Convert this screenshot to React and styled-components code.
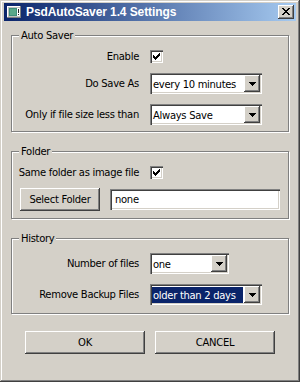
import React from "react";
import styled, { createGlobalStyle } from "styled-components";

const GlobalStyle = createGlobalStyle`
  html, body {
    margin: 0;
    padding: 0;
    background: #d4d0c8;
  }
  body {
    font-family: "DejaVu Sans", Verdana, sans-serif;
    font-size: 10px;
    letter-spacing: -0.3px;
    color: #000;
  }
`;

const raised = `
  box-shadow: inset -1px -1px 0 #404040, inset 1px 1px 0 #fff,
    inset -2px -2px 0 #808080, inset 2px 2px 0 #d4d0c8;
`;

const sunken = `
  box-shadow: inset 1px 1px 0 #808080, inset 2px 2px 0 #404040,
    inset -1px -1px 0 #fff, inset -2px -2px 0 #d4d0c8;
`;

const Window = styled.div`
  box-sizing: border-box;
  width: 300px;
  height: 382px;
  padding: 3px 4px 4px 4px;
  background: #d4d0c8;
  box-shadow: inset -1px -1px 0 #404040, inset 1px 1px 0 #d4d0c8,
    inset -2px -2px 0 #808080, inset 2px 2px 0 #fff;
  display: flex;
  flex-direction: column;
`;

const TitleBar = styled.div`
  height: 18px;
  padding: 0 2px;
  display: flex;
  align-items: center;
  gap: 4px;
  background: linear-gradient(to right, #0a246a, #a6caf0);
`;

const Title = styled.span`
  flex: 1;
  color: #fff;
  font-family: "Liberation Sans", Arial, sans-serif;
  font-weight: bold;
  font-size: 12px;
  letter-spacing: -0.1px;
`;

const CloseButton = styled.span`
  box-sizing: border-box;
  width: 16px;
  height: 14px;
  background: #d4d0c8;
  ${raised}
  display: flex;
  align-items: center;
  justify-content: center;
  padding: 0 1px 1px 0;
`;

const Body = styled.div`
  flex: 1;
  padding: 8px 7px 0 7px;
  display: flex;
  flex-direction: column;
  gap: 13px;
`;

const Group = styled.fieldset`
  margin: 0;
  min-width: 0;
  padding: ${(p) => p.$pt || 7}px 0 ${(p) => p.$pb}px 2px;
  border: 1px solid #808080;
  box-shadow: inset 1px 1px 0 #fff, 1px 1px 0 #fff;
`;

const Caption = styled.legend`
  margin-left: 5px;
  padding: 0 2px;
  line-height: 13px;
  background: #d4d0c8;
`;

const Rows = styled.div`
  display: grid;
  grid-template-columns: 125px auto;
  grid-template-rows: ${(p) => p.$rows};
  column-gap: 11px;
  row-gap: 10px;
  align-items: center;
  justify-items: start;
`;

const Label = styled.span`
  justify-self: end;
  white-space: nowrap;
`;

const CheckBox = styled.span`
  box-sizing: border-box;
  width: 13px;
  height: 13px;
  background: #fff;
  ${sunken}
  display: flex;
  align-items: center;
  justify-content: center;
`;

const Combo = styled.div`
  box-sizing: border-box;
  width: ${(p) => p.$w}px;
  height: 21px;
  padding: 2px;
  background: #fff;
  ${sunken}
  display: flex;
`;

const ComboText = styled.span`
  flex: 1;
  margin: 1px 1px 0 0;
  padding-left: 1px;
  display: flex;
  align-items: center;
  white-space: nowrap;
  background: ${(p) => (p.$selected ? "#0a246a" : "transparent")};
  color: ${(p) => (p.$selected ? "#fff" : "#000")};
`;

const DropButton = styled.span`
  width: 16px;
  background: #d4d0c8;
  ${raised}
  display: flex;
  align-items: center;
  justify-content: center;
`;

const FolderRow = styled.div`
  margin-top: 9px;
  padding-left: 6px;
  display: flex;
  align-items: center;
  gap: 10px;
`;

const PushButton = styled.button`
  box-sizing: border-box;
  width: ${(p) => p.$w}px;
  height: 23px;
  padding: 0;
  border: 0;
  background: #d4d0c8;
  ${raised}
  font: inherit;
  letter-spacing: inherit;
  color: #000;
`;

const TextField = styled.div`
  box-sizing: border-box;
  width: 170px;
  height: 21px;
  padding: 0 5px;
  background: #fff;
  ${sunken}
  display: flex;
  align-items: center;
`;

const Actions = styled.div`
  margin-top: 4px;
  display: flex;
  justify-content: center;
  gap: 10px;
`;

const Check = () => (
  <svg width="7" height="7" viewBox="0 0 7 7" shapeRendering="crispEdges">
    <path
      d="M6 0h1v3H6zM5 1h1v3H5zM4 2h1v3H4zM3 3h1v3H3zM2 4h1v3H2zM1 3h1v3H1zM0 2h1v3H0z"
      fill="#000"
    />
  </svg>
);

const Arrow = () => (
  <svg width="7" height="4" viewBox="0 0 7 4" shapeRendering="crispEdges">
    <path d="M0 0h7v1H0zM1 1h5v1H1zM2 2h3v1H2zM3 3h1v1H3z" fill="#000" />
  </svg>
);

const CloseGlyph = () => (
  <svg width="8" height="7" viewBox="0 0 8 7" shapeRendering="crispEdges">
    <path
      d="M0 0h2v1H0zM6 0h2v1H6zM1 1h2v1H1zM5 1h2v1H5zM2 2h4v1H2zM3 3h2v1H3zM2 4h4v1H2zM1 5h2v1H1zM5 5h2v1H5zM0 6h2v1H0zM6 6h2v1H6z"
      fill="#000"
    />
  </svg>
);

const AppIcon = () => (
  <svg width="16" height="14" viewBox="0 0 16 14" shapeRendering="crispEdges">
    <rect x="1" y="1" width="14" height="12" fill="#c0c0c0" />
    <rect x="1" y="1" width="14" height="1" fill="#fff" />
    <rect x="1" y="1" width="1" height="12" fill="#fff" />
    <rect x="1" y="12" width="14" height="1" fill="#808080" />
    <rect x="14" y="1" width="1" height="12" fill="#808080" />
    <rect x="3" y="3" width="8" height="8" fill="#3f8f7a" />
    <rect x="4" y="4" width="6" height="6" fill="#5aa88a" />
    <rect x="11" y="3" width="3" height="8" fill="#fff" />
    <rect x="12" y="4" width="1" height="4" fill="#222" />
    <rect x="12" y="9" width="1" height="1" fill="#222" />
  </svg>
);

const Select = ({ width, value, selected }) => (
  <Combo $w={width}>
    <ComboText $selected={selected}>{value}</ComboText>
    <DropButton>
      <Arrow />
    </DropButton>
  </Combo>
);

const App = () => {
  return (
    <>
      <GlobalStyle />
      <Window>
        <TitleBar>
          <AppIcon />
          <Title>PsdAutoSaver 1.4 Settings</Title>
          <CloseButton>
            <CloseGlyph />
          </CloseButton>
        </TitleBar>
        <Body>
          <Group $pb={6}>
            <Caption>Auto Saver</Caption>
            <Rows $rows="14px 21px 21px">
              <Label>Enable</Label>
              <CheckBox>
                <Check />
              </CheckBox>
              <Label>Do Save As</Label>
              <Select width={112} value="every 10 minutes" />
              <Label>Only if file size less than</Label>
              <Select width={112} value="Always Save" />
            </Rows>
          </Group>
          <Group $pb={7}>
            <Caption>Folder</Caption>
            <Rows $rows="14px">
              <Label>Same folder as image file</Label>
              <CheckBox>
                <Check />
              </CheckBox>
            </Rows>
            <FolderRow>
              <PushButton $w={80}>Select Folder</PushButton>
              <TextField>none</TextField>
            </FolderRow>
          </Group>
          <Group $pt={8} $pb={8}>
            <Caption>History</Caption>
            <Rows $rows="21px 21px">
              <Label>Number of files</Label>
              <Select width={79} value="one" />
              <Label>Remove Backup Files</Label>
              <Select width={112} value="older than 2 days" selected />
            </Rows>
          </Group>
          <Actions>
            <PushButton $w={120}>OK</PushButton>
            <PushButton $w={120}>CANCEL</PushButton>
          </Actions>
        </Body>
      </Window>
    </>
  );
};

export default App;
